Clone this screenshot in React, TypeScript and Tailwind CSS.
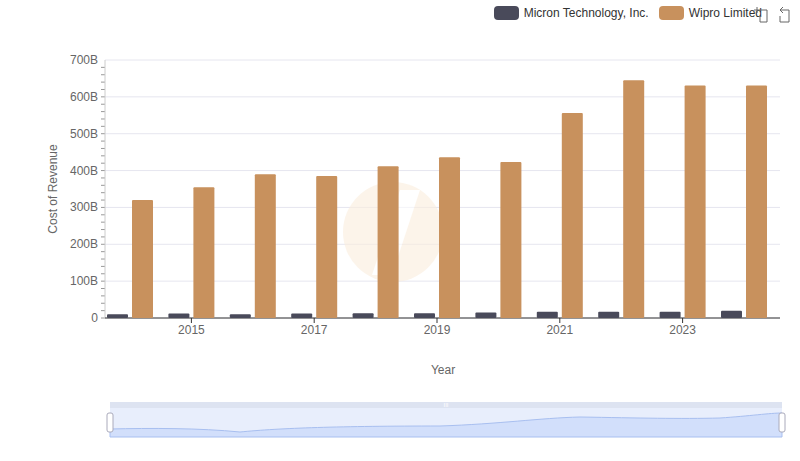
export default function App() {
  const mic = [10, 12, 10, 12, 13, 13, 15, 17, 17, 17, 20];
  const wip = [320, 355, 390, 385, 412, 436, 423, 556, 645, 631, 631];
  const x0 = 105, slot = 61.4, yb = 318, k = 258 / 700;
  const ticks = [0, 100, 200, 300, 400, 500, 600, 700];
  return (
    <div className="w-[800px] h-[461px] bg-white relative" style={{ fontFamily: '"Liberation Sans", Arial, sans-serif' }}>
      <div className="absolute right-[38px] top-[4px] flex items-center gap-[10px] text-[12px] text-[#333]">
        <div className="flex items-center gap-[5px]"><span className="w-[25px] h-[14px] rounded-[4px] bg-[#494a5a]" />Micron Technology, Inc.</div>
        <div className="flex items-center gap-[5px]"><span className="w-[25px] h-[14px] rounded-[4px] bg-[#c8915d]" />Wipro Limited</div>
      </div>
      <svg className="absolute right-[8px] top-[6px]" width="40" height="18" viewBox="0 0 40 18" fill="none" stroke="#666" strokeWidth="1">
        <path d="M2 4h6M5 1v6M8 4h7v12H8M8 10v6" />
        <path d="M28 4h9v12h-9V10M28 4l3-3M28 4l3 3" />
      </svg>
      <svg width="800" height="461" className="block">
        {ticks.map(t => (
          <g key={t}>
            <line x1={x0} x2={780} y1={yb - t * k} y2={yb - t * k} stroke="#e6e6ef" />
            <text x={98} y={yb - t * k + 4} fontSize="12" fill="#666" textAnchor="end">{t === 0 ? "0" : t + "B"}</text>
          </g>
        ))}
        {Array.from({ length: 35 }).map((_, i) => (
          <line key={i} x1={101} x2={105} y1={yb - i * 20 * k} y2={yb - i * 20 * k} stroke="#999" />
        ))}
        <line x1={x0} x2={x0} y1={60} y2={yb} stroke="#ccc" />
        <line x1={x0} x2={780} y1={yb} y2={yb} stroke="#333" />
        <g opacity="0.6">
          <circle cx="393" cy="232" r="50" fill="#fbeedd" />
          <path d="M372 275 L400 190 L420 190 L392 275 Z" fill="#ffffff" />
        </g>
        {wip.map((w, i) => {
          const s = x0 + i * slot + 2;
          return (
            <g key={i}>
              <rect x={s} y={yb - mic[i] * k} width={21} height={mic[i] * k} fill="#494a5a" rx="1" />
              <rect x={s + 25} y={yb - w * k} width={21} height={w * k} fill="#c8915d" rx="1" />
            </g>
          );
        })}
        {[2015, 2017, 2019, 2021, 2023].map((y, j) => {
          const i = 1 + j * 2;
          const cx = x0 + i * slot + 25;
          return (
            <g key={y}>
              <line x1={cx} x2={cx} y1={yb} y2={yb + 5} stroke="#333" />
              <text x={cx} y={yb + 16} fontSize="12" fill="#666" textAnchor="middle">{y}</text>
            </g>
          );
        })}
        <text x={443} y={374} fontSize="12" fill="#666" textAnchor="middle">Year</text>
        <text x={57} y={189} fontSize="12" fill="#666" textAnchor="middle" transform="rotate(-90 57 189)">Cost of Revenue</text>
        <rect x={110} y={402} width={672} height={6} fill="#dde3f1" />
        <rect x={110} y={408} width={672} height={29} fill="#e8eefc" />
        <path d="M110 429 C150 428 200 428 240 432 C280 428 340 426 440 426 C500 424 540 418 580 417 C640 418 680 419 720 418 C750 416 770 413 782 413 L782 437 L110 437 Z" fill="#d2dffb" stroke="#a8bff0" />
        <text x={446} y={407} fontSize="6" fill="#fff" textAnchor="middle">III</text>
        <rect x={107} y={413} width={6} height={19} rx="2" fill="#fff" stroke="#aab" />
        <rect x={779} y={413} width={6} height={19} rx="2" fill="#fff" stroke="#aab" />
      </svg>
    </div>
  );
}
